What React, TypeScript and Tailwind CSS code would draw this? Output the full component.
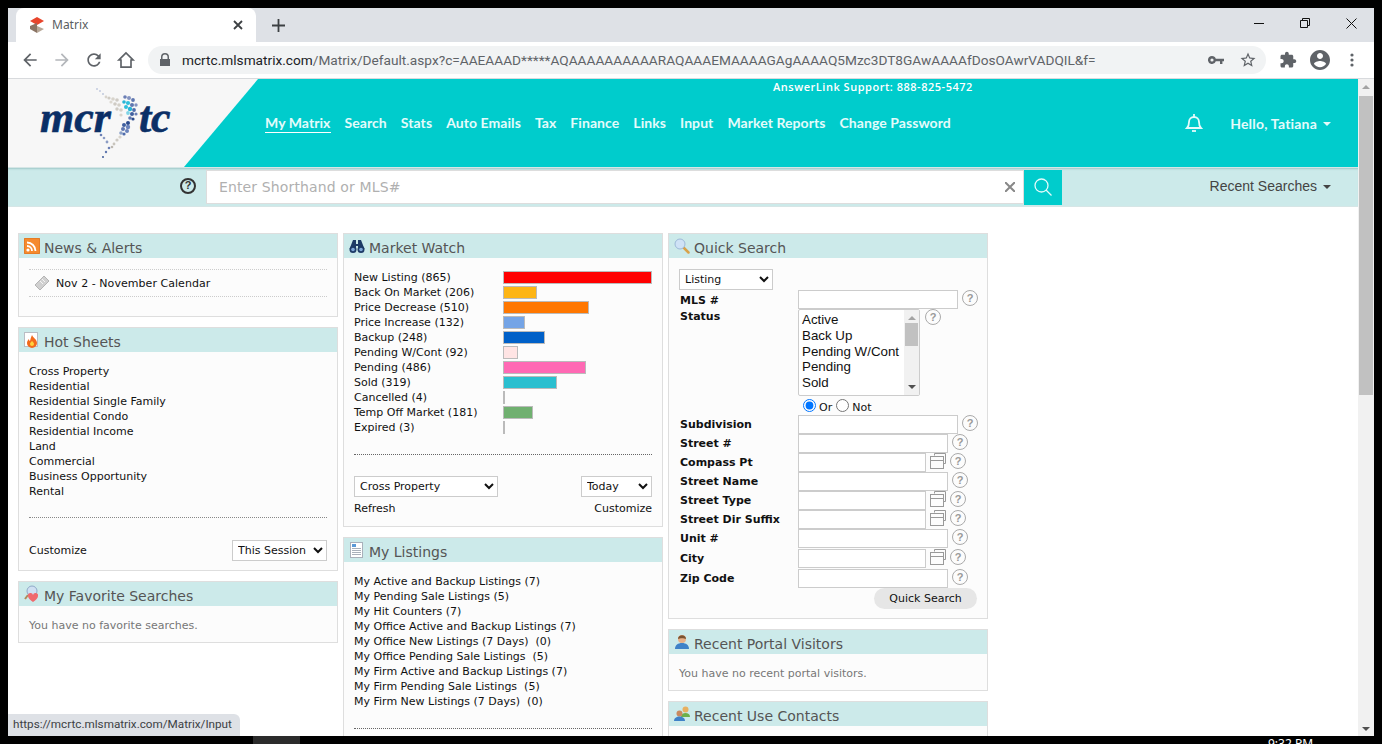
// App.tsx
import React from "react";

const verdana = "font-['DejaVu_Sans',sans-serif]";

const bars = [
  { label: "New Listing (865)", width: 149, color: "#ff0000" },
  { label: "Back On Market (206)", width: 34, color: "#fdb515" },
  { label: "Price Decrease (510)", width: 86, color: "#ff7700" },
  { label: "Price Increase (132)", width: 22, color: "#74a4e6" },
  { label: "Backup (248)", width: 42, color: "#0060c8" },
  { label: "Pending W/Cont (92)", width: 15, color: "#ffe4e4" },
  { label: "Pending (486)", width: 83, color: "#ff69b4" },
  { label: "Sold (319)", width: 54, color: "#2bbfcf" },
  { label: "Cancelled (4)", width: 2, color: "#bbbbbb" },
  { label: "Temp Off Market (181)", width: 30, color: "#70b070" },
  { label: "Expired (3)", width: 2, color: "#bbbbbb" },
];

const hotSheets = [
  "Cross Property",
  "Residential",
  "Residential Single Family",
  "Residential Condo",
  "Residential Income",
  "Land",
  "Commercial",
  "Business Opportunity",
  "Rental",
];

const listings = [
  "My Active and Backup Listings (7)",
  "My Pending Sale Listings (5)",
  "My Hit Counters (7)",
  "My Office Active and Backup Listings (7)",
  "My Office New Listings (7 Days)  (0)",
  "My Office Pending Sale Listings  (5)",
  "My Firm Active and Backup Listings (7)",
  "My Firm Pending Sale Listings  (5)",
  "My Firm New Listings (7 Days)  (0)",
];

const navLinks = ["Search", "Stats", "Auto Emails", "Tax", "Finance", "Links", "Input", "Market Reports", "Change Password"];

const afterStatus = [
  { label: "Subdivision", kind: "full", tall: false },
  { label: "Street #", kind: "mid", tall: false },
  { label: "Compass Pt", kind: "pick", tall: false },
  { label: "Street Name", kind: "mid", tall: false },
  { label: "Street Type", kind: "pick", tall: false },
  { label: "Street Dir Suffix", kind: "pick", tall: false },
  { label: "Unit #", kind: "mid", tall: true },
  { label: "City", kind: "pick", tall: true },
  { label: "Zip Code", kind: "mid", tall: false },
];

const birdDots = [
  [2, 1, 0.7, "#8b9cc4"], [5, 3, 0.7, "#8b9cc4"], [8, 6, 0.8, "#9aa8c8"], [11, 9, 1.4, "#d8d4cc"], [14, 10, 1.6, "#cfcbc4"],
  [18, 11, 1.8, "#d8d4cc"], [22, 12, 1.8, "#cfcbc4"], [16, 14, 1.6, "#dcd8d0"], [20, 16, 1.8, "#cfcbc4"], [24, 17, 1.8, "#d4d0c8"],
  [22, 21, 1.7, "#cfcbc4"], [26, 22, 1.8, "#d4d0c8"], [26, 27, 1.6, "#d8d4cc"], [30, 9, 1.8, "#6b7fb5"], [34, 10, 2, "#8493c0"],
  [38, 12, 1.9, "#5f77b0"], [29, 14, 1.8, "#27b5d6"], [33, 15, 2.1, "#2fc0dc"], [37, 17, 2, "#5f77b0"], [41, 17, 1.7, "#8493c0"],
  [31, 19, 2, "#2fc0dc"], [35, 21, 2.2, "#27b5d6"], [39, 22, 1.9, "#4f6cab"], [33, 25, 1.9, "#7fd4e6"], [37, 26, 2, "#3f5f9f"],
  [41, 26, 1.6, "#6b7fb5"], [35, 30, 1.8, "#5f77b0"], [38, 31, 1.6, "#2a4a8c"], [33, 35, 2, "#2a4a8c"], [29, 37, 2, "#3f5f9f"],
  [33, 39, 2.2, "#6b84bc"], [28, 41, 2, "#5f77b0"], [32, 43, 2, "#6b84bc"], [26, 45, 1.8, "#8aa0c8"], [29, 46, 1.6, "#4f6cab"],
  [25, 49, 1.6, "#d8d4cc"], [22, 52, 1.6, "#cfcbc4"], [19, 56, 1.4, "#c8c4bc"], [17, 59, 1.3, "#bdb9b2"], [6, 47, 1.3, "#6b7fb5"],
  [9, 50, 1.3, "#8b9cc4"], [12, 54, 1.4, "#8b9cc4"], [14, 60, 1.3, "#6b7fb5"], [11, 64, 1.2, "#5f77b0"], [8, 69, 0.9, "#2a4a8c"],
] as const;

const Help = ({ size = 16, dark = false }: { size?: number; dark?: boolean }) => (
  <span
    className={`flex shrink-0 items-center justify-center rounded-full border ${
      dark ? "border-2 border-[#333] text-[#333]" : "border-[#aaa] text-[#999]"
    } font-['Liberation_Sans',sans-serif] font-bold`}
    style={{ width: size, height: size, fontSize: size - 5 }}
  >
    ?
  </span>
);

const Picker = () => (
  <svg width="16" height="16" viewBox="0 0 16 16" fill="none" stroke="#999" strokeWidth="1" className="shrink-0">
    <path d="M4.500 2.500v-2h11v10h-2" />
    <rect x="0.500" y="3.500" width="13" height="12" fill="#fcfcfc" />
    <path d="M0.500 7.500h13" />
  </svg>
);

const RssIcon = () => (
  <svg width="16" height="16" viewBox="0 0 16 16">
    <rect width="16" height="16" rx="2" fill="#f58a2e" stroke="#d96f1a" />
    <circle cx="4" cy="12" r="1.600" fill="#fff" />
    <path d="M3 8a5 5 0 0 1 5 5M3 4.500a8.500 8.500 0 0 1 8.500 8.500" stroke="#fff" strokeWidth="1.800" fill="none" />
  </svg>
);

const FlameIcon = () => (
  <svg width="16" height="16" viewBox="0 0 16 16">
    <rect x="0.500" y="0.500" width="13" height="14" fill="#fff" stroke="#b9bdc4" />
    <path d="M8 3c1 3 5 4 5 8a5 5 0 0 1-10 0c0-2 1-3 2-4 0 1 .500 2 1 2 .500-2 1-4 2-6z" fill="#f26a1b" />
    <path d="M8 9c1 1 2 2 2 3a2 2 0 0 1-4 0c0-1 1-2 2-3z" fill="#ffd23c" />
  </svg>
);

const BinocularsIcon = () => (
  <svg width="16" height="16" viewBox="0 0 16 16" fill="#1d3a66">
    <path d="M4 2h3v4h2V2h3l3.500 9h-6.500V8H7v3H.500z" />
    <circle cx="4" cy="11.500" r="3.500" />
    <circle cx="12" cy="11.500" r="3.500" />
    <circle cx="4" cy="11.500" r="1.800" fill="#7ea6d8" />
    <circle cx="12" cy="11.500" r="1.800" fill="#7ea6d8" />
  </svg>
);

const MagnifierIcon = () => (
  <svg width="16" height="16" viewBox="0 0 16 16">
    <path d="M9.500 9.500l5 5" stroke="#d8a24a" strokeWidth="2.500" strokeLinecap="round" />
    <circle cx="6" cy="6" r="5" fill="#cfe2f6" stroke="#9db9d8" />
  </svg>
);

const DocIcon = () => (
  <svg width="16" height="16" viewBox="0 0 16 16">
    <rect x="1.500" y="0.500" width="12" height="15" fill="#fff" stroke="#a9b0ba" />
    <rect x="3" y="2" width="4" height="3" fill="#5b9ad6" />
    <path d="M3 6.500h9M3 8.500h9M3 10.500h9M3 12.500h9" stroke="#a9b0ba" />
  </svg>
);

const SearchHeartIcon = () => (
  <svg width="18" height="18" viewBox="0 0 18 18" className="shrink-0">
    <circle cx="9" cy="6" r="5" fill="#cfe0f2" stroke="#8fa9c8" />
    <path d="M5 10l-3 4" stroke="#b08a5a" strokeWidth="2" />
    <path d="M10 17c-3-2-5-4-5-6a2.500 2.500 0 0 1 5-1 2.500 2.500 0 0 1 5 1c0 2-2 4-5 6z" fill="#f0696d" />
  </svg>
);

const PersonIcon = () => (
  <svg width="16" height="16" viewBox="0 0 16 16">
    <path d="M1 15c0-4 3-6 7-6s7 2 7 6z" fill="#3f82c8" />
    <circle cx="8" cy="5" r="4" fill="#e8b088" />
    <path d="M4 5c0-5 8-5 8 0-2-1-6-1-8 0z" fill="#7a5230" />
  </svg>
);

const ContactsIcon = () => (
  <svg width="17" height="16" viewBox="0 0 17 16" className="shrink-0">
    <circle cx="11.500" cy="3.500" r="3" fill="#e8b060" />
    <path d="M7 11c0-3 2-4 4.500-4S16 8 16 11z" fill="#6cb04a" />
    <circle cx="5.500" cy="7.500" r="3" fill="#c98a60" />
    <path d="M0 15c0-3 2.500-4.500 5.500-4.500S11 12 11 15z" fill="#3f82c8" />
  </svg>
);

const Panel = ({ icon, title, children }: { icon: React.ReactNode; title: string; children: React.ReactNode }) => (
  <div className="border border-[#dedede] bg-[#fcfcfc]">
    <div className="flex h-6 items-center gap-1 bg-[#cceaea] pl-[5px] text-[14px] text-[#555]">
      <span className="flex w-[16px] justify-center">{icon}</span>
      <span className="pt-[5px]">{title}</span>
    </div>
    {children}
  </div>
);

const Field = ({ kind }: { kind: string }) => {
  if (kind === "full") {
    return (
      <div className="flex items-start gap-1">
        <input className="h-[19px] w-[160px] border border-[#ccc] bg-white" />
        <Help />
      </div>
    );
  }
  if (kind === "mid") {
    return (
      <div className="flex items-start gap-1">
        <input className="h-[19px] w-[150px] border border-[#ccc] bg-white" />
        <Help />
      </div>
    );
  }
  return (
    <div className="flex items-start">
      <input className="h-[19px] w-[128px] border border-[#ccc] bg-white" />
      <span className="ml-[4px] mr-[4px]">
        <Picker />
      </span>
      <Help />
    </div>
  );
};

const App: React.FC = () => {
  return (
    <div className={`relative h-[744px] w-[1382px] overflow-hidden bg-black p-2 text-[11px] ${verdana}`}>
      <div className="flex h-[728px] flex-col overflow-hidden">
        {/* browser chrome */}
        <div className="flex h-[34px] shrink-0 items-end bg-[#dee1e6] pl-2 font-['Noto_Sans',sans-serif]">
          <div className="flex h-[34px] w-[240px] items-center rounded-t-lg bg-white pl-[13px] pr-[13px]">
            <svg width="16" height="16" viewBox="0 0 16 16" className="shrink-0">
              <path d="M1 4l7-4 7 4-7 4z" fill="#e8452c" />
              <path d="M1 9l7-3v10l-7-4z" fill="#8a7464" />
              <path d="M8 9l7 3-7 4z" fill="#b8a898" />
            </svg>
            <span className="ml-[7px] text-[12px] text-[#5a5d61]">Matrix</span>
            <span className="ml-auto">
              <svg width="10" height="10" viewBox="0 0 10 10" stroke="#3c4043" strokeWidth="1.800">
                <path d="M1 1l8 8M9 1l-8 8" />
              </svg>
            </span>
          </div>
          <div className="ml-[16px] flex h-[34px] items-center">
            <svg width="13" height="13" viewBox="0 0 13 13" stroke="#3c4043" strokeWidth="1.800">
              <path d="M6.500 0v13M0 6.500h13" />
            </svg>
          </div>
          <div className="ml-auto flex h-[34px] items-start">
            <div className="flex h-[30px] w-[46px] items-center justify-center">
              <svg width="10" height="10" viewBox="0 0 10 10" stroke="#111">
                <path d="M0 5.500h10" />
              </svg>
            </div>
            <div className="flex h-[30px] w-[46px] items-center justify-center">
              <svg width="10" height="10" viewBox="0 0 10 10" fill="none" stroke="#111">
                <path d="M.500 2.500h7v7h-7zM2.500 2.500v-2h7v7h-2" />
              </svg>
            </div>
            <div className="flex h-[30px] w-[46px] items-center justify-center">
              <svg width="11" height="11" viewBox="0 0 11 11" stroke="#111">
                <path d="M.500 .500l10 10M10.500 .500l-10 10" />
              </svg>
            </div>
          </div>
        </div>
        <div className="flex h-[37px] shrink-0 items-center border-b border-[#d8dadd] bg-white">
          <div className="flex w-[140px] items-center pl-[12px]">
            <svg width="20" height="20" viewBox="0 0 24 24" fill="#5f6368">
              <path d="M20 11H7.830l5.590-5.590L12 4l-8 8 8 8 1.410-1.410L7.830 13H20v-2z" />
            </svg>
            <svg width="20" height="20" viewBox="0 0 24 24" fill="#b4b7bb" className="ml-[12px]">
              <path d="M4 11h12.170l-5.590-5.590L12 4l8 8-8 8-1.410-1.410L16.170 13H4v-2z" />
            </svg>
            <svg width="20" height="20" viewBox="0 0 24 24" fill="#5f6368" className="ml-[12px]">
              <path d="M17.650 6.350C16.200 4.900 14.210 4 12 4c-4.420 0-7.990 3.580-7.990 8s3.570 8 7.990 8c3.730 0 6.840-2.550 7.730-6h-2.080c-.820 2.330-3.040 4-5.650 4-3.310 0-6-2.690-6-6s2.690-6 6-6c1.660 0 3.140.690 4.220 1.780L13 11h7V4l-2.350 2.350z" />
            </svg>
            <svg width="20" height="20" viewBox="0 0 24 24" fill="none" stroke="#5f6368" strokeWidth="2" className="ml-[12px]">
              <path d="M12 3.500 3.500 12H6v8.500h12V12h2.500z" />
            </svg>
          </div>
          <div className="flex h-[28px] w-[1118px] items-center rounded-full bg-[#f1f3f4] pl-[11px] pr-[9px]">
            <svg width="12" height="14" viewBox="0 0 12 14" fill="#5f6368" className="shrink-0">
              <path d="M2 6V4a4 4 0 0 1 8 0v2h1v7H1V6zm1.500 0h5V4a2.500 2.500 0 0 0-5 0z" />
            </svg>
            <span className="ml-[11px] whitespace-nowrap font-['Roboto',sans-serif] text-[13.67px] text-[#5f6368]">
              <span className="text-[#202124]">mcrtc.mlsmatrix.com</span>
              /Matrix/Default.aspx?c=AAEAAAD*****AQAAAAAAAAAARAQAAAEMAAAAGAgAAAAQ5Mzc3DT8GAwAAAAfDosOAwrVADQIL&amp;f=
            </span>
            <svg width="16" height="16" viewBox="0 0 16 16" fill="#5f6368" className="ml-auto shrink-0">
              <path d="M4 4a4 4 0 0 1 3.800 2.800H16v2.400h-1.600V12h-2.400V9.200H7.800A4 4 0 1 1 4 4zm0 2.400a1.600 1.600 0 1 0 0 3.200 1.600 1.600 0 0 0 0-3.200z" />
            </svg>
            <svg width="18" height="18" viewBox="0 0 24 24" fill="#5f6368" className="ml-[15px] shrink-0">
              <path d="M22 9.240l-7.190-.620L12 2 9.190 8.630 2 9.240l5.460 4.730L5.820 21 12 17.270 18.180 21l-1.630-7.030L22 9.240zM12 15.400l-3.760 2.270 1-4.280-3.320-2.880 4.380-.380L12 6.100l1.710 4.040 4.380.380-3.320 2.880 1 4.280L12 15.400z" />
            </svg>
          </div>
          <div className="flex items-center pl-[13px]">
            <svg width="18" height="18" viewBox="0 0 24 24" fill="#5f6368">
              <path d="M20.500 11H19V7c0-1.100-.900-2-2-2h-4V3.500C13 2.120 11.880 1 10.500 1S8 2.120 8 3.500V5H4c-1.100 0-1.990.900-1.990 2v3.800H3.500c1.490 0 2.700 1.210 2.700 2.700s-1.210 2.700-2.700 2.700H2V20c0 1.100.900 2 2 2h3.800v-1.500c0-1.490 1.210-2.700 2.700-2.700 1.490 0 2.700 1.210 2.700 2.700V22H17c1.100 0 2-.900 2-2v-4h1.500c1.380 0 2.500-1.120 2.500-2.500S21.880 11 20.500 11z" />
            </svg>
            <svg width="24" height="24" viewBox="0 0 24 24" fill="#5f6368" className="ml-[11px]">
              <path d="M12 2C6.480 2 2 6.480 2 12s4.480 10 10 10 10-4.480 10-10S17.520 2 12 2zm0 3c1.660 0 3 1.340 3 3s-1.340 3-3 3-3-1.340-3-3 1.340-3 3-3zm0 14.200c-2.500 0-4.710-1.280-6-3.220.030-1.990 4-3.080 6-3.080 1.990 0 5.970 1.090 6 3.080-1.290 1.940-3.500 3.220-6 3.220z" />
            </svg>
            <svg width="4" height="14" viewBox="0 0 4 14" fill="#5f6368" className="ml-[18px]">
              <circle cx="2" cy="2" r="1.600" />
              <circle cx="2" cy="7" r="1.600" />
              <circle cx="2" cy="12" r="1.600" />
            </svg>
          </div>
        </div>

        {/* page */}
        <div className="flex min-h-0 flex-1">
          <div className="min-w-0 flex-1 overflow-hidden bg-white">
            <header className="flex h-[88px] bg-[#00cccc] font-['Lato',sans-serif]">
              <div className="relative w-[250px] shrink-0 bg-[#f7f7f7] [clip-path:polygon(0_0,100%_0,176px_100%,0_100%)]">
                <div className="flex pl-[32px] pt-[14px] font-['Liberation_Serif',serif] text-[44px] font-bold italic leading-[50px] text-[#0b2f66] [-webkit-text-stroke:0.6px_#0b2f66]">
                  <span>mcr</span>
                  <span className="ml-[28px]">tc</span>
                </div>
                <svg width="44" height="72" viewBox="0 0 44 72" className="absolute left-[87px] top-[9px]">
                  {birdDots.map(([cx, cy, r, fill], i) => (
                    <circle key={i} cx={cx} cy={cy} r={r} fill={fill} />
                  ))}
                </svg>
              </div>
              <div className="min-w-0 flex-1">
                <div className="h-[14px] pl-[515px] pt-px font-['Open_Sans',sans-serif] text-[11px] font-semibold leading-[14px] tracking-[.52px] whitespace-nowrap text-white">
                  AnswerLink Support: 888-825-5472
                </div>
                <div className="mt-[19px] flex items-center pl-[7px] pr-[27px] text-[14px] font-bold tracking-[.07px] text-[#e4fbfb]">
                  <span className="border-b border-white leading-[19px]">My Matrix</span>
                  {navLinks.map((link) => (
                    <span key={link} className="ml-[14px] leading-[20px]">
                      {link}
                    </span>
                  ))}
                  <svg width="20" height="22" viewBox="0 0 20 22" fill="none" stroke="#e4fbfb" strokeWidth="1.800" className="ml-auto">
                    <path d="M3 16c1.500-1.500 2-3 2-6a5 5 0 0 1 10 0c0 3 .500 4.500 2 6z" />
                    <path d="M10 2v3" />
                    <path d="M8 19h4" />
                  </svg>
                  <span className="ml-[26px] whitespace-nowrap tracking-[.2px]">Hello, Tatiana</span>
                  <span className="ml-[6px] mt-[2px] border-x-4 border-t-4 border-x-transparent border-t-[#e4fbfb]" />
                </div>
              </div>
            </header>

            <div className="flex h-[40px] items-center border-y border-[#d6e6e6] bg-[#cceaea] shadow-[inset_0_2px_2px_-1px_#9fc8c8]">
              <div className="ml-[172px] -mt-[3px]">
                <Help size={16} dark />
              </div>
              <div className="ml-[10px] flex h-[34px] w-[818px] items-center border border-[#ddd] bg-white pl-[12px] pr-[8px] text-[14px] tracking-[.13px] text-[#b0b0b0]">
                <span>Enter Shorthand or MLS#</span>
                <svg width="10" height="10" viewBox="0 0 10 10" stroke="#888" strokeWidth="2" className="ml-auto">
                  <path d="M0 0l10 10M10 0 0 10" />
                </svg>
              </div>
              <div className="flex h-[35px] w-[38px] items-center justify-center bg-[#00cccc]">
                <svg width="18" height="18" viewBox="0 0 18 18" fill="none" stroke="#e4fbfb" strokeWidth="1.300">
                  <circle cx="7.500" cy="7.500" r="6.500" />
                  <path d="M12 12l5.500 5.500" />
                </svg>
              </div>
              <span className="ml-auto -mt-[2px] font-['Liberation_Sans',sans-serif] text-[14px] text-[#444]">Recent Searches</span>
              <span className="ml-[6px] mr-[27px] border-x-4 border-t-4 border-x-transparent border-t-[#444]" />
            </div>

            <div className="grid grid-cols-[320px_320px_320px] gap-x-[5px] pl-[10px] pt-[26px] leading-[15px] text-[#111]">
              <div className="flex flex-col gap-[10px]">
                <Panel icon={<RssIcon />} title="News & Alerts">
                  <div className="px-[10px] pb-[19px] pt-[11px]">
                    <div className="flex h-[28px] items-center border-y border-dotted border-[#ccc] pl-[5px]">
                      <svg width="16" height="16" viewBox="0 0 16 16" className="shrink-0">
                        <path d="M10 1l5 5-9 9-5-5z" fill="#d0d0d0" stroke="#b4b4b4" />
                        <path d="M6 6l3 3M8 4l3 3" stroke="#f4f4f4" />
                      </svg>
                      <span className="ml-[6px] tracking-[.05px]">Nov 2 - November Calendar</span>
                    </div>
                  </div>
                </Panel>
                <Panel icon={<FlameIcon />} title="Hot Sheets">
                  <div className="px-[10px] pt-[12px]">
                    {hotSheets.map((item) => (
                      <div key={item} className="h-[15px]">
                        {item}
                      </div>
                    ))}
                    <div className="mt-[18px] border-t border-dotted border-[#888]" />
                    <div className="mt-[22px] box-content flex h-[21px] items-center justify-between pb-[9px]">
                      <span>Customize</span>
                      <select className="h-[21px] w-[95px] border border-[#ccc] bg-white pl-[1px] text-[11px]" defaultValue="This Session">
                        <option>This Session</option>
                      </select>
                    </div>
                  </div>
                </Panel>
                <Panel icon={<SearchHeartIcon />} title="My Favorite Searches">
                  <div className="h-[36px] px-[10px] pt-[12px] text-[#777]">You have no favorite searches.</div>
                </Panel>
              </div>

              <div className="flex flex-col gap-[10px]">
                <Panel icon={<BinocularsIcon />} title="Market Watch">
                  <div className="px-[10px] pt-[12px]">
                    {bars.map((bar) => (
                      <div key={bar.label} className="flex h-[15px] items-center">
                        <span className="w-[149px] shrink-0 whitespace-nowrap">{bar.label}</span>
                        <span
                          className="-mt-[1px] h-[13px] border border-[#bbb]"
                          style={{ width: bar.width, backgroundColor: bar.color }}
                        />
                      </div>
                    ))}
                    <div className="mt-[19px] border-t border-dotted border-[#666]" />
                    <div className="mt-[21px] flex justify-between">
                      <select className="h-[21px] w-[144px] border border-[#ccc] bg-white pl-[1px] text-[11px]" defaultValue="Cross Property">
                        <option>Cross Property</option>
                      </select>
                      <select className="h-[21px] w-[71px] border border-[#ccc] bg-white pl-[1px] text-[11px]" defaultValue="Today">
                        <option>Today</option>
                      </select>
                    </div>
                    <div className="flex h-[29px] justify-between pt-[4px]">
                      <span>Refresh</span>
                      <span>Customize</span>
                    </div>
                  </div>
                </Panel>
                <Panel icon={<DocIcon />} title="My Listings">
                  <div className="px-[10px] pt-[12px]">
                    {listings.map((item) => (
                      <div key={item} className="h-[15px] whitespace-pre">
                        {item}
                      </div>
                    ))}
                    <div className="mt-[19px] h-[40px] border-t border-dotted border-[#666]" />
                  </div>
                </Panel>
              </div>

              <div className="flex flex-col gap-[10px]">
                <Panel icon={<MagnifierIcon />} title="Quick Search">
                  <div className="h-[360px] pl-[10px] pt-[11px]">
                    <select className="h-[21px] w-[94px] border border-[#ccc] bg-white pl-[1px] text-[11px]" defaultValue="Listing">
                      <option>Listing</option>
                    </select>
                    <div className="flex h-[19px] items-center">
                      <span className="w-[119px] pl-px pt-[2px] font-bold">MLS #</span>
                      <Field kind="full" />
                    </div>
                    <div className="flex">
                      <span className="w-[119px] pl-px font-bold">Status</span>
                      <div className="flex h-[87px] w-[122px] overflow-hidden rounded-[2px] border border-[#ccc] bg-white font-['Liberation_Sans',sans-serif] text-[13.33px] leading-[15.8px]">
                        <div className="min-w-0 flex-1 whitespace-nowrap pl-[3px] pt-[2px]">
                          <div>Active</div>
                          <div>Back Up</div>
                          <div>Pending W/Cont</div>
                          <div>Pending</div>
                          <div>Sold</div>
                        </div>
                        <div className="flex w-[15px] shrink-0 flex-col items-center bg-[#f1f1f1]">
                          <span className="mt-[6px] border-x-4 border-b-4 border-x-transparent border-b-[#a3a3a3]" />
                          <span className="mt-[3px] h-[23px] w-[13px] bg-[#c1c1c1]" />
                          <span className="mt-auto mb-[6px] border-x-4 border-t-4 border-x-transparent border-t-[#505050]" />
                        </div>
                      </div>
                      <span className="ml-[5px]">
                        <Help />
                      </span>
                    </div>
                    <div className="flex h-[19px] items-center pl-[124px]">
                      <input type="radio" name="statusMode" defaultChecked className="h-[13px] w-[13px]" />
                      <span className="ml-[3px] mr-[4px] mt-[3px]">Or</span>
                      <input type="radio" name="statusMode" className="h-[13px] w-[13px]" />
                      <span className="ml-[3px] mt-[3px]">Not</span>
                    </div>
                    {afterStatus.map((row) => (
                      <div key={row.label} className={`flex items-start ${row.tall ? "h-[20px]" : "h-[19px]"}`}>
                        <span className="w-[119px] whitespace-nowrap pl-px pt-[2px] font-bold">{row.label}</span>
                        <Field kind={row.kind} />
                      </div>
                    ))}
                    <div className="flex justify-end pr-[10px]">
                      <span className="flex h-[21px] w-[103px] items-center justify-center rounded-full bg-[#e6e6e6]">Quick Search</span>
                    </div>
                  </div>
                </Panel>
                <Panel icon={<PersonIcon />} title="Recent Portal Visitors">
                  <div className="h-[36px] px-[10px] pt-[12px] text-[#777]">You have no recent portal visitors.</div>
                </Panel>
                <Panel icon={<ContactsIcon />} title="Recent Use Contacts">
                  <div className="h-[40px]" />
                </Panel>
              </div>
            </div>
          </div>

          {/* page scrollbar */}
          <div className="flex w-4 shrink-0 flex-col items-center bg-[#f1f1f1]">
            <span className="mt-[6px] border-x-4 border-b-4 border-x-transparent border-b-[#a3a3a3]" />
            <span className="mt-[7px] h-[299px] w-[14px] bg-[#c1c1c1]" />
            <span className="mt-auto mb-[5px] border-x-4 border-t-4 border-x-transparent border-t-[#505050]" />
          </div>
        </div>
      </div>

      {/* status bubble */}
      <div className="absolute bottom-2 left-2 flex h-[22px] w-[232px] items-center rounded-tr-md bg-[#dee1e6] pl-[5px] font-['Roboto',sans-serif] text-[11.7px] text-[#3c4043]">
        https://mcrtc.mlsmatrix.com/Matrix/Input
      </div>

      {/* desktop taskbar peeking out under the window */}
      <div className="absolute bottom-0 left-[253px] h-2 w-[47px] bg-[#2b2b2b]" />
      <div className="absolute bottom-[-7px] left-[1268px] font-['Noto_Sans',sans-serif] text-[12px] leading-[15px] text-white">9:32 PM</div>
    </div>
  );
};

export default App;
